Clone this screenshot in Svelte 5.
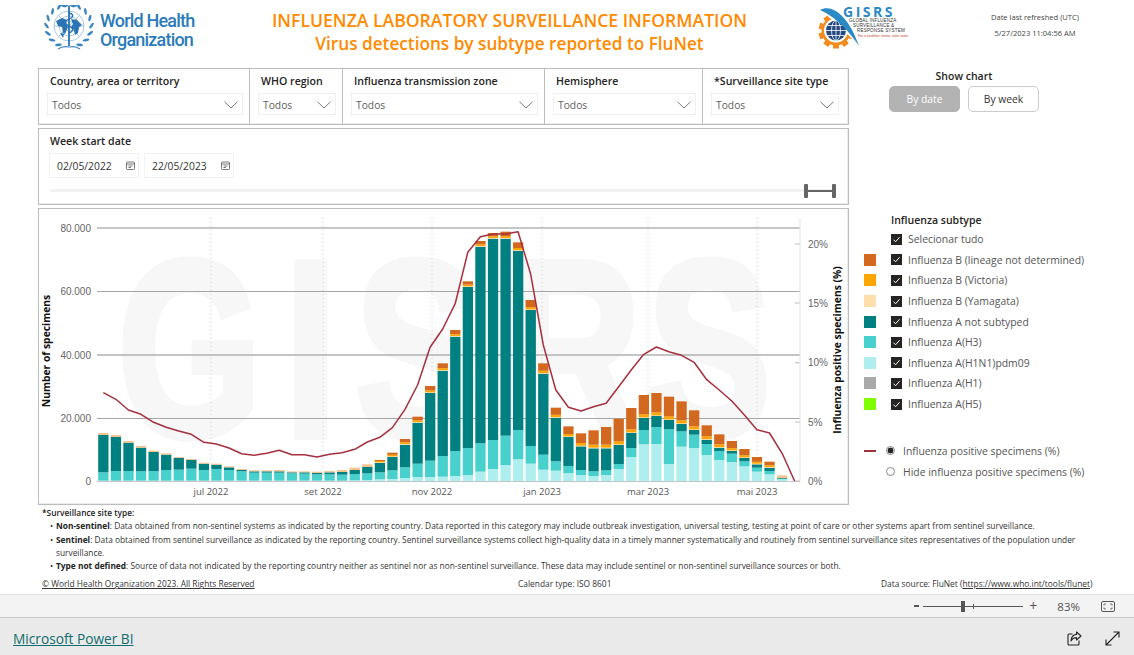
<script>
	const filters = [
		{ label: 'Country, area or territory', width: 211 },
		{ label: 'WHO region', width: 93 },
		{ label: 'Influenza transmission zone', width: 202 },
		{ label: 'Hemisphere', width: 158 },
		{ label: '*Surveillance site type', width: 145 }
	];

	const subtypes = [
		{ name: 'Selecionar tudo' },
		{ name: 'Influenza B (lineage not determined)', color: '#d2691e' },
		{ name: 'Influenza B (Victoria)', color: '#ffa500' },
		{ name: 'Influenza B (Yamagata)', color: '#ffdead' },
		{ name: 'Influenza A not subtyped', color: '#008080' },
		{ name: 'Influenza A(H3)', color: '#48d1cc' },
		{ name: 'Influenza A(H1N1)pdm09', color: '#afeeee' },
		{ name: 'Influenza A(H1)', color: '#a9a9a9' },
		{ name: 'Influenza A(H5)', color: '#7fff00' }
	];

	// stack tops per week, measured in 1/3 px: pdm09, H3, not subtyped, total
	const weeks = [
		[797, 772, 660, 654], [797, 768, 666, 660], [797, 768, 683, 678], [797, 769, 698, 693],
		[797, 768, 711, 707], [797, 765, 719, 715], [797, 764, 729, 726], [797, 761, 735, 732],
		[797, 765, 746, 743], [797, 762, 749, 746], [797, 765, 757, 754], [797, 769, 765, 762],
		[797, 773, 769, 766], [797, 773, 769, 766], [797, 773, 769, 765], [797, 775, 772, 769],
		[797, 776, 772, 769], [797, 778, 774, 770], [797, 778, 772, 768], [797, 779, 771, 765],
		[796, 777, 765, 758], [795, 775, 756, 748], [793, 772, 744, 735], [792, 766, 726, 713],
		[789, 757, 689, 672], [786, 746, 623, 605], [786, 737, 534, 513], [785, 723, 467, 445],
		[783, 708, 365, 345], [780, 699, 216, 199], [770, 685, 95, 78], [762, 675, 71, 54],
		[750, 662, 71, 50], [733, 645, 107, 82], [746, 693, 285, 255], [764, 719, 476, 445],
		[767, 739, 608, 578], [774, 753, 666, 634], [780, 765, 694, 655], [783, 769, 700, 646],
		[780, 766, 700, 636], [762, 747, 690, 611], [726, 699, 654, 579], [688, 645, 609, 540],
		[687, 636, 603, 534], [747, 643, 615, 545], [695, 649, 627, 559], [699, 659, 645, 586],
		[720, 687, 674, 631], [735, 708, 698, 658], [741, 716, 708, 678], [754, 739, 729, 702],
		[770, 758, 748, 726], [778, 768, 758, 740], [793, 791, 789, 781]
	];

	const positive = [
		533, 553, 585, 598, 622, 637, 648, 658, 682, 687, 699, 716, 721, 715, 706, 719, 719, 726, 718,
		713, 703, 681, 667, 638, 583, 510, 397, 342, 265, 112, 65, 57, 57, 50, 178, 390, 525, 577, 588,
		575, 565, 515, 465, 418, 396, 410, 421, 442, 494, 525, 558, 600, 644, 654, 715, 798
	];

	const BASE = 798;
	const toY = (z) => 215 + z / 3;
	const toX = (i) => 103.3 + 12.57 * i;

	const segments = weeks.flatMap(([pdm, h3, ns, total], i) => {
		const gap = ns - total;
		const parts = [
			[pdm, BASE, '#afeeee'],
			[h3, pdm, '#48d1cc'],
			[ns, h3, '#008080']
		];
		if (gap <= 8) {
			parts.push([total, ns, '#f4c48f']);
		} else {
			const vic = Math.min(9, 3 + gap * 0.12);
			parts.push([ns - 2, ns, '#ffdead'], [ns - 2 - vic, ns - 2, '#ffa500'], [total, ns - 2 - vic, '#d2691e']);
		}
		return parts.map(([top, bottom, fill]) => ({
			x: toX(i) - 5.1,
			y: toY(top),
			h: (bottom - top) / 3,
			fill
		}));
	});

	const linePoints = positive.map((z, i) => `${toX(i).toFixed(1)},${toY(z).toFixed(1)}`).join(' ');

	const leftTicks = [
		{ label: '80.000', y: 228 },
		{ label: '60.000', y: 291.5 },
		{ label: '40.000', y: 355 },
		{ label: '20.000', y: 418.5 },
		{ label: '0', y: 481.5 }
	];
	const rightTicks = [
		{ label: '20%', y: 244 },
		{ label: '15%', y: 303 },
		{ label: '10%', y: 362.7 },
		{ label: '5%', y: 422 },
		{ label: '0%', y: 481 }
	];
	const months = [
		{ label: 'jul 2022', x: 211 },
		{ label: 'set 2022', x: 323 },
		{ label: 'nov 2022', x: 432 },
		{ label: 'jan 2023', x: 542 },
		{ label: 'mar 2023', x: 648 },
		{ label: 'mai 2023', x: 757 }
	];

	// laurel leaves of the WHO emblem
	const laurel = Array.from({ length: 9 }, (_, i) => {
		const a = ((118 + i * 21) * Math.PI) / 180;
		return { a: 118 + i * 21, dx: 22.5 * Math.cos(a), dy: 22.5 * Math.sin(a) };
	});

	const gearTeeth = Array.from({ length: 10 }, (_, i) => i * 36);
</script>

<div class="page">
	<div class="report">
		<header class="header">
			<div class="who">
				<svg class="who-mark" width="50" height="48" viewBox="44 5 50 48">
					<g fill="none" stroke="#7fb0d8" stroke-width="0.7">
						<circle cx="69" cy="26" r="15" />
						<circle cx="69" cy="26" r="10" />
						<circle cx="69" cy="26" r="5" />
						<path d="M54 26H84M69 11V41M58.5 15.5 79.5 36.5M79.5 15.5 58.5 36.5" />
					</g>
					<path
						d="M56 21l6-3 5 2-1 4 2 3-3 7-2-1-1-6-4-1zM71 19l6 1 5 5-3 2-1 6-3 2-1-5-3-3 2-3zM60 33l4 1-1 4z"
						fill="#2a74b3"
					/>
					<path d="M69 5.5V46" stroke="#2a74b3" stroke-width="1.8" />
					<path d="M69 13c5 1 5 4 0 6s-5 5 0 7 5 5 0 7" fill="none" stroke="#2a74b3" stroke-width="1.3" />
					{#each laurel as leaf}
						<ellipse
							cx={69 + leaf.dx}
							cy={26 + leaf.dy * 0.95}
							rx="3.4"
							ry="1.3"
							fill="#3d85c0"
							transform={`rotate(${leaf.a + 55} ${69 + leaf.dx} ${26 + leaf.dy * 0.95})`}
						/>
						<ellipse
							cx={69 - leaf.dx}
							cy={26 + leaf.dy * 0.95}
							rx="3.4"
							ry="1.3"
							fill="#3d85c0"
							transform={`rotate(${-leaf.a - 55} ${69 - leaf.dx} ${26 + leaf.dy * 0.95})`}
						/>
					{/each}
					<path d="M58 49c4-3 7-3 11-2 4-1 7-1 11 2" fill="none" stroke="#3d85c0" stroke-width="1.2" />
				</svg>
				<div class="who-name">World Health<br />Organization</div>
			</div>
			<div class="titles">
				<h1>INFLUENZA LABORATORY SURVEILLANCE INFORMATION</h1>
				<h2>Virus detections by subtype reported to FluNet</h2>
			</div>
			<svg class="gisrs" width="92" height="56" viewBox="816 4 92 56">
				<clipPath id="gear-side"><path d="M810 8 820 13 862 52 850 62H810z" /></clipPath>
				<g clip-path="url(#gear-side)" fill="#f28c1e">
					<circle cx="836" cy="35" r="14.5" />
					{#each gearTeeth as deg}
						<rect x="833" y="17.5" width="6" height="6" transform={`rotate(${deg} 836 35)`} />
					{/each}
				</g>
				<circle cx="836" cy="34.5" r="12" fill="#fff" />
				<circle cx="836" cy="34.5" r="10" fill="#25497f" />
				<g fill="none" stroke="#fff" stroke-width="0.8">
					<ellipse cx="836" cy="34.5" rx="4.5" ry="10" />
					<path d="M836 24.5V44.5M826 34.5H846M827.5 29.5H844.5M827.5 39.5H844.5" />
				</g>
				<path d="M820 14C832 7 849 20 859 50 850 37 838 22 820 14z" fill="#2a8ac6" />
				<text class="gisrs-name" x="843" y="21">GISRS</text>
				<text class="gisrs-small" x="849" y="26">GLOBAL INFLUENZA</text>
				<text class="gisrs-small" x="853" y="31">SURVEILLANCE &amp;</text>
				<text class="gisrs-small" x="857" y="36">RESPONSE SYSTEM</text>
				<text class="gisrs-tag" x="858" y="41">For a healthier, better, safer tomorrow</text>
			</svg>
			<div class="refresh">
				<span>Date last refreshed (UTC)</span>
				<span>5/27/2023 11:04:56 AM</span>
			</div>
		</header>

		<div class="main">
			<div class="left">
				<section class="filters">
					{#each filters as f}
						<div class="cell" style="width:{f.width}px">
							<div class="label">{f.label}</div>
							<div class="select">
								<span>Todos</span>
								<svg width="14" height="8" viewBox="0 0 14 8"><path d="M.5.8 7 7 13.5.8" fill="none" stroke="#666" stroke-width="0.9" /></svg>
							</div>
						</div>
					{/each}
				</section>

				<section class="dates">
					<div class="label">Week start date</div>
					<div class="date-row">
						{#each ['02/05/2022', '22/05/2023'] as d}
							<div class="date">
								<span>{d}</span>
								<svg width="9" height="9" viewBox="0 0 9 9">
									<rect x="0.5" y="1" width="8" height="7.5" rx="1" fill="none" stroke="#555" stroke-width="0.8" />
									<path d="M.5 3H8.5M2.5 5H6.5M2.5 6.5H5" stroke="#555" stroke-width="0.8" />
								</svg>
							</div>
						{/each}
					</div>
					<div class="range">
						<div class="range-bar">
							<i></i><b></b><i></i>
						</div>
					</div>
				</section>

				<section class="chart">
					<svg width="809" height="295" viewBox="39 209 809 295">
						<text class="watermark" transform="translate(0 436) scale(.74 1)" x="159 385 480 685 875">GISRS</text>

						{#each months as m}
							<line x1={m.x} x2={m.x} y1="218" y2="481" stroke="#cfcfcf" stroke-width="1" stroke-dasharray="1 3" />
							<text class="tick month" x={m.x} y="495">{m.label}</text>
						{/each}

						<line x1="97" x2="800" y1="228" y2="228" stroke="#c6c6c6" stroke-width="2" />
						<line x1="97" x2="800" y1="291.5" y2="291.5" stroke="#a6a6a6" />
						<line x1="97" x2="800" y1="355" y2="355" stroke="#b0b0b0" stroke-width="1.4" />
						<line x1="97" x2="800" y1="418.5" y2="418.5" stroke="#a6a6a6" />
						<line x1="97" x2="800" y1="481.5" y2="481.5" stroke="#c6c6c6" />

						{#each segments as s}
							<rect x={s.x} y={s.y} width="10.3" height={s.h} fill={s.fill} />
						{/each}

						<polyline points={linePoints} fill="none" stroke="#a4303f" stroke-width="1.5" stroke-linejoin="round" />

						{#each leftTicks as t}
							<text class="tick" x="91" y={t.y + 3.5} text-anchor="end">{t.label}</text>
						{/each}
						{#each rightTicks as t}
							<line x1="795" x2="800" y1={t.y} y2={t.y} stroke="#bbb" />
							<text class="tick" x="808" y={t.y + 3.5}>{t.label}</text>
						{/each}
						<line x1="800" x2="800" y1="218" y2="481" stroke="#e3e3e3" />

						<text class="axis-title" transform="translate(50 351) rotate(-90)">Number of specimens</text>
						<text class="axis-title" transform="translate(841 350) rotate(-90)">Influenza positive specimens (%)</text>
					</svg>
				</section>
			</div>

			<aside class="right">
				<div class="show-chart">
					<div class="show-title">Show chart</div>
					<div class="buttons">
						<span class="btn active">By date</span>
						<span class="btn">By week</span>
					</div>
				</div>

				<div class="legend-title">Influenza subtype</div>
				<ul class="legend">
					{#each subtypes as s}
						<li>
							<i class="swatch" style="background:{s.color ?? 'transparent'}"></i>
							<svg class="check" width="11" height="11" viewBox="0 0 11 11">
								<rect width="11" height="11" fill="#252423" />
								<path d="M2.5 5.7 4.6 7.8 8.6 3.2" fill="none" stroke="#fff" stroke-width="1" />
							</svg>
							<span>{s.name}</span>
						</li>
					{/each}
				</ul>

				<div class="radios">
					<div class="radio-row">
						<i class="line-key"></i>
						<span class="radio on"></span>
						<span>Influenza positive specimens (%)</span>
					</div>
					<div class="radio-row">
						<i class="line-key blank"></i>
						<span class="radio"></span>
						<span>Hide influenza positive specimens (%)</span>
					</div>
				</div>
			</aside>
		</div>

		<div class="notes">
			<p class="notes-head">*Surveillance site type:</p>
			<ul>
				<li><b>Non-sentinel</b>: Data obtained from non-sentinel systems as indicated by the reporting country. Data reported in this category may include outbreak investigation, universal testing, testing at point of care or other systems apart from sentinel surveillance.</li>
				<li><b>Sentinel</b>: Data obtained from sentinel surveillance as indicated by the reporting country. Sentinel surveillance systems collect high-quality data in a timely manner systematically and routinely from sentinel surveillance sites representatives of the population under surveillance.</li>
				<li><b>Type not defined</b>: Source of data not indicated by the reporting country neither as sentinel nor as non-sentinel surveillance. These data may include sentinel or non-sentinel surveillance sources or both.</li>
			</ul>
		</div>

		<div class="credits">
			<span class="copyright">© World Health Organization 2023. All Rights Reserved</span>
			<span class="calendar">Calendar type: ISO 8601</span>
			<span>Data source: FluNet (<u>https://www.who.int/tools/flunet</u>)</span>
		</div>
	</div>

	<div class="zoombar">
		<span class="minus"></span>
		<div class="zoom-track"><i class="thumb"></i><i class="notch"></i></div>
		<span class="plus">+</span>
		<span class="percent">83%</span>
		<svg width="14" height="11" viewBox="0 0 14 11">
			<rect x="0.5" y="0.5" width="13" height="10" rx="1.5" fill="none" stroke="#555" />
			<path d="M3 4.5V3H5M9 3H11V4.5M11 6.5V8H9M5 8H3V6.5" fill="none" stroke="#555" stroke-width="0.8" />
		</svg>
	</div>

	<footer class="footer">
		<span class="brand">Microsoft Power BI</span>
		<div class="footer-icons">
			<svg width="15" height="15" viewBox="0 0 15 15">
				<path d="M5.5 3H2a1 1 0 0 0-1 1v9a1 1 0 0 0 1 1h9a1 1 0 0 0 1-1V9.5" fill="none" stroke="#252423" stroke-width="1.1" />
				<path d="M9.5 1 14 5 9.5 9V6.6C7 6.6 5.2 7.6 4 10c.2-3.6 2.2-6.200 5.5-6.600z" fill="none" stroke="#252423" stroke-width="1.1" stroke-linejoin="round" />
			</svg>
			<svg width="15" height="15" viewBox="0 0 15 15">
				<path d="M1 14 14 1M8.5 1H14V6.5M1 8.5V14H6.5" fill="none" stroke="#252423" stroke-width="1.1" />
			</svg>
		</div>
	</footer>
</div>

<style>
	:global(body) {
		margin: 0;
		background: #fff;
	}

	.page {
		width: 1134px;
		height: 655px;
		display: flex;
		flex-direction: column;
		overflow: hidden;
		font-family: 'Open Sans', 'Noto Sans', sans-serif;
		color: #252423;
	}

	.report {
		height: 595px;
		padding-left: 38px;
		box-sizing: border-box;
		border-bottom: 1px solid #e2e2e2;
		flex-shrink: 0;
	}

	.header {
		height: 68px;
		margin-left: -38px;
		display: flex;
	}

	.who {
		width: 150px;
		margin-left: 44px;
		display: flex;
		padding-top: 5px;
		box-sizing: border-box;
	}

	.who-mark {
		flex-shrink: 0;
	}

	.who-name {
		margin: 7px 0 0 6px;
		font: 500 18px/18.5px Roboto, sans-serif;
		letter-spacing: -0.8px;
		color: #2b7bb9;
		white-space: nowrap;
	}

	.titles {
		width: 624px;
		padding: 9px 0 0 7px;
		box-sizing: border-box;
		text-align: center;
		color: #ff8a00;
		white-space: nowrap;
	}

	h1,
	h2 {
		margin: 0;
		font-size: 17.6px;
		line-height: 23px;
		font-weight: 600;
	}

	h2 {
		font-size: 17.2px;
	}

	.gisrs {
		flex-shrink: 0;
		margin-left: -2px;
	}

	.gisrs-name {
		font: 700 14px 'Open Sans', sans-serif;
		letter-spacing: 2.5px;
		fill: #2a8ac6;
	}

	.gisrs-small {
		font: 400 4.6px 'Liberation Sans', sans-serif;
		letter-spacing: 0.15px;
		fill: #333;
	}

	.gisrs-tag {
		font: 400 3.4px 'Liberation Sans', sans-serif;
		fill: #c0472a;
	}

	.refresh {
		margin-left: 82px;
		width: 90px;
		padding-top: 13px;
		display: flex;
		flex-direction: column;
		align-items: center;
		gap: 7px;
		font-size: 7.55px;
		line-height: 9px;
		color: #444;
		white-space: nowrap;
	}

	.main {
		display: flex;
	}

	.left {
		width: 811px;
		display: flex;
		flex-direction: column;
		gap: 3px;
		flex-shrink: 0;
	}

	.filters,
	.dates,
	.chart {
		box-sizing: border-box;
		border: 1px solid #bdbdbd;
		box-shadow: inset -1px -1px 0 #ececec;
	}

	.filters {
		height: 57px;
		display: flex;
	}

	.cell {
		box-sizing: border-box;
		padding: 5px 6px 0 8px;
		border-right: 1px solid #bdbdbd;
	}

	.cell:last-child {
		border-right: 0;
		padding-right: 9px;
	}

	.label {
		font-size: 10.6px;
		line-height: 14px;
		font-weight: 600;
		padding-left: 3px;
		white-space: nowrap;
	}

	.select {
		margin-top: 5px;
		height: 22px;
		box-sizing: border-box;
		border: 1px solid #f0f0f0;
		padding: 1px 4px 0;
		display: flex;
		align-items: center;
		justify-content: space-between;
		font-size: 10.3px;
		color: #605e5c;
	}

	.dates {
		height: 77px;
		padding: 5px 10px 0 8px;
	}

	.date-row {
		display: flex;
		gap: 5px;
		margin-top: 5px;
		margin-left: 2px;
	}

	.date {
		width: 90px;
		height: 25px;
		box-sizing: border-box;
		border: 1px solid #f2f2f2;
		padding: 0 3px 0 7px;
		display: flex;
		align-items: center;
		justify-content: space-between;
		font-size: 10.3px;
		color: #333;
	}

	.range {
		margin: 11px 2px 0 3px;
		height: 3px;
		background: #f1f1f1;
		display: flex;
		justify-content: flex-end;
		align-items: center;
	}

	.range-bar {
		width: 32px;
		display: flex;
		align-items: center;
	}

	.range-bar i {
		width: 4px;
		height: 14px;
		background: #666;
		border-radius: 1px;
	}

	.range-bar b {
		flex: 1;
		height: 2px;
		background: #666;
	}

	.chart {
		height: 297px;
	}

	.chart svg {
		display: block;
	}

	.watermark {
		font: 700 250px 'Liberation Sans', sans-serif;
		fill: #f7f7f7;
		stroke: #f7f7f7;
		stroke-width: 8px;
	}

	.tick {
		font: 400 10px 'Liberation Sans', sans-serif;
		fill: #666;
	}

	.month {
		text-anchor: middle;
		font-family: 'Open Sans', sans-serif;
		font-size: 9.5px;
		fill: #555;
	}

	.axis-title {
		font: 700 10.3px 'Open Sans', sans-serif;
		fill: #111;
		text-anchor: middle;
	}

	.right {
		flex: 1;
		padding: 0 0 0 15px;
		box-sizing: border-box;
	}

	.show-chart {
		width: 150px;
		margin-left: 25px;
		height: 145px;
		box-sizing: border-box;
		text-align: center;
	}

	.show-title {
		font-size: 10.5px;
		line-height: 16px;
		font-weight: 600;
	}

	.buttons {
		display: flex;
		justify-content: space-between;
		margin-top: 2px;
	}

	.btn {
		width: 71px;
		height: 26px;
		box-sizing: border-box;
		border: 1px solid #ccc;
		border-radius: 5px;
		font-size: 10.3px;
		line-height: 24px;
		color: #333;
	}

	.btn.active {
		background: #b3b3b3;
		border-color: #b3b3b3;
		color: #fff;
	}

	.legend-title {
		margin-left: 27px;
		font-size: 10.5px;
		line-height: 14px;
		font-weight: 600;
	}

	.legend {
		list-style: none;
		margin: 2px 0 0;
		padding: 0;
	}

	.legend li {
		height: 20.6px;
		display: flex;
		align-items: center;
		font-size: 10.4px;
		color: #555;
		white-space: nowrap;
	}

	.swatch {
		width: 12px;
		height: 12px;
		flex-shrink: 0;
	}

	.check {
		margin: 0 6px 0 15px;
		flex-shrink: 0;
	}

	.radios {
		margin-top: 26px;
	}

	.radio-row {
		height: 21px;
		display: flex;
		align-items: center;
		font-size: 10.4px;
		color: #555;
		white-space: nowrap;
	}

	.line-key {
		width: 12px;
		height: 2px;
		background: #a4303f;
		flex-shrink: 0;
	}

	.line-key.blank {
		background: none;
	}

	.radio {
		width: 9px;
		height: 9px;
		margin: 0 8px 0 10px;
		border-radius: 50%;
		border: 1px solid #888;
		box-sizing: border-box;
		flex-shrink: 0;
	}

	.radio.on {
		background: radial-gradient(circle, #252423 0 2.7px, #fff 3.2px);
	}

	.notes {
		margin-left: 4px;
		padding-top: 1px;
		width: 1050px;
		font-size: 8.36px;
		line-height: 13.3px;
		color: #333;
	}

	.notes-head {
		margin: 0;
		font-weight: 600;
		color: #222;
	}

	.notes ul {
		list-style: none;
		margin: 0;
		padding: 0 0 0 14px;
	}

	.notes li {
		position: relative;
	}

	.notes li::before {
		content: '•';
		position: absolute;
		left: -6px;
	}

	.notes b {
		font-weight: 700;
		color: #222;
	}

	.credits {
		margin: 6px 0 0 4px;
		display: flex;
		font-size: 8.4px;
		line-height: 12px;
		color: #333;
		white-space: nowrap;
	}

	.copyright {
		width: 476px;
		text-decoration: underline;
	}

	.calendar {
		width: 363px;
	}

	.zoombar {
		height: 23px;
		flex-shrink: 0;
		background: #f3f3f3;
		border-bottom: 1px solid #c8c8c8;
		box-sizing: border-box;
		display: flex;
		align-items: center;
		justify-content: flex-end;
		padding-right: 19px;
		font-size: 11.5px;
		color: #555;
	}

	.minus {
		width: 5px;
		height: 2px;
		background: #555;
	}

	.zoom-track {
		position: relative;
		width: 100px;
		height: 1px;
		margin: 0 6px 0 4px;
		background: #555;
	}

	.thumb {
		position: absolute;
		left: 38px;
		top: -5px;
		width: 4px;
		height: 11px;
		background: #555;
	}

	.notch {
		position: absolute;
		left: 50px;
		top: -2px;
		width: 1px;
		height: 5px;
		background: #555;
	}

	.plus {
		font-size: 14px;
		line-height: 14px;
	}

	.percent {
		margin: 0 21px 0 20px;
	}

	.footer {
		flex: 1;
		background: #eaeaea;
		display: flex;
		align-items: center;
		justify-content: space-between;
		padding: 3px 14px 0 13px;
	}

	.brand {
		font-size: 13.7px;
		color: #0f6d6d;
		text-decoration: underline;
	}

	.footer-icons {
		display: flex;
		gap: 23px;
	}
</style>
